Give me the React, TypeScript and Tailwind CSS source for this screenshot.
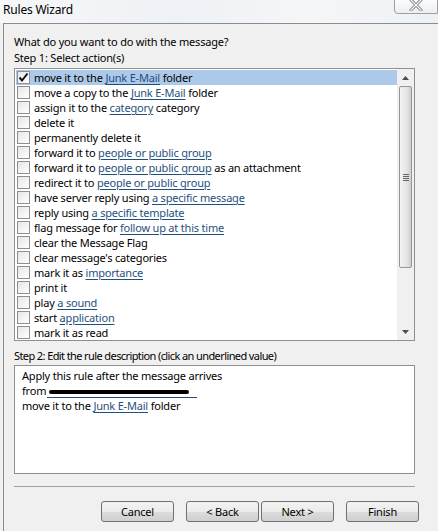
import React from "react";

type Part = string | { link: string };

const actions: Part[][] = [
  ["move it to the ", { link: "Junk E-Mail" }, " folder"],
  ["move a copy to the ", { link: "Junk E-Mail" }, " folder"],
  ["assign it to the ", { link: "category" }, " category"],
  ["delete it"],
  ["permanently delete it"],
  ["forward it to ", { link: "people or public group" }],
  ["forward it to ", { link: "people or public group" }, " as an attachment"],
  ["redirect it to ", { link: "people or public group" }],
  ["have server reply using ", { link: "a specific message" }],
  ["reply using ", { link: "a specific template" }],
  ["flag message for ", { link: "follow up at this time" }],
  ["clear the Message Flag"],
  ["clear message's categories"],
  ["mark it as ", { link: "importance" }],
  ["print it"],
  ["play ", { link: "a sound" }],
  ["start ", { link: "application" }],
  ["mark it as read"],
];

function Link({ children }: { children: React.ReactNode }) {
  return <span className="text-[#1f4f7e] underline underline-offset-[2px]">{children}</span>;
}

function Checkbox({ checked }: { checked?: boolean }) {
  return (
    <span className="flex h-[13px] w-[13px] shrink-0 items-center justify-center border border-[#8f8f8f] bg-gradient-to-br from-[#e6e6e6] to-white">
      {checked && (
        <svg width="11" height="11" viewBox="0 0 11 11">
          <path d="M1.5 5.5 L4 8.5 L9.5 1.5" fill="none" stroke="#111" strokeWidth="2" />
        </svg>
      )}
    </span>
  );
}

function Button({ label }: { label: string }) {
  return (
    <button className="h-[21px] w-[73px] rounded-[3px] border border-[#707070] bg-[linear-gradient(#f2f2f2_0%,#ebebeb_50%,#dddddd_51%,#cfcfcf_100%)] text-[11px] leading-none text-black">
      {label}
    </button>
  );
}

function Scrollbar() {
  return (
    <div className="flex w-[17px] shrink-0 flex-col items-center bg-[#f0f0f0]">
      <div className="flex h-[17px] items-center justify-center">
        <svg width="7" height="4" viewBox="0 0 7 4">
          <path d="M0 4 L3.5 0 L7 4 Z" fill="#4d4d4d" />
        </svg>
      </div>
      <div className="flex h-[182px] w-[13px] items-center justify-center rounded-[2px] border border-[#979797] bg-[linear-gradient(90deg,#f3f3f3,#e4e4e4_60%,#cfcfcf)]">
        <div className="flex flex-col gap-[1px]">
          <span className="h-[1px] w-[6px] bg-[#666]" />
          <span className="h-[1px] w-[6px] bg-[#666]" />
          <span className="h-[1px] w-[6px] bg-[#666]" />
          <span className="h-[1px] w-[6px] bg-[#666]" />
        </div>
      </div>
      <div className="flex-1" />
      <div className="flex h-[17px] items-center justify-center">
        <svg width="7" height="4" viewBox="0 0 7 4">
          <path d="M0 0 L3.5 4 L7 0 Z" fill="#4d4d4d" />
        </svg>
      </div>
    </div>
  );
}

export default function App() {
  return (
    <main className="flex h-[531px] w-[438px] flex-col overflow-hidden bg-[#f0f0f0] font-['Noto_Sans',sans-serif] text-[11px] tracking-[-0.2px] text-black">
      {/* title bar */}
      <div className="relative h-[23px] shrink-0 bg-[linear-gradient(90deg,#f6f7f9,#eef1f5_40%,#f4f6f8_70%,#eef1f4)]">
        <span className="absolute left-[3px] top-[2px] text-[12px] leading-[16px]">Rules Wizard</span>
        <div className="absolute right-0 top-[-2px] flex h-[16px] w-[44px] items-center justify-center rounded-bl-[4px] border border-[#9aa0a8] bg-[linear-gradient(#fdfdfd,#eceef1)]">
          <svg width="14" height="12" viewBox="0 0 14 12" className="mt-[-2px]">
            <path d="M2 1 L12 11 M12 1 L2 11" stroke="#7a7f86" strokeWidth="3" strokeLinecap="round" />
            <path d="M2 1 L12 11 M12 1 L2 11" stroke="#fafafa" strokeWidth="1.2" strokeLinecap="round" />
          </svg>
        </div>
      </div>

      {/* dialog body */}
      <div className="ml-[3px] flex flex-1 flex-col border-l border-t border-[#8c8c8c] px-[10px] pt-[10px] leading-[16px]">
        <p>What do you want to do with the message?</p>
        <p>Step 1: Select action(s)</p>

        <div className="mt-[2px] flex h-[273px] w-[401px] border border-[#8e8f8f] bg-white">
          <ul className="flex-1 pl-[1px] pt-[1px]">
            {actions.map((parts, i) => (
              <li
                key={i}
                className={`flex h-[15px] items-center gap-[4px] whitespace-nowrap pl-[1px] leading-[15px] ${i === 0 ? "bg-[#adc9ea]" : ""}`}
              >
                <Checkbox checked={i === 0} />
                <span>
                  {parts.map((p, j) =>
                    typeof p === "string" ? <React.Fragment key={j}>{p}</React.Fragment> : <Link key={j}>{p.link}</Link>
                  )}
                </span>
              </li>
            ))}
          </ul>
          <Scrollbar />
        </div>

        <p className="mt-[7px] tracking-[-0.6px]">Step 2: Edit the rule description (click an underlined value)</p>
        <div className="mt-[1px] h-[109px] w-[401px] border border-[#8e8f8f] bg-white pl-[7px] pt-[2px] leading-[15px]">
          <p>Apply this rule after the message arrives</p>
          <p className="flex items-center">
            from
            <span className="relative ml-[1px] inline-block h-[15px] w-[150px] border-b border-[#1f4f7e]">
              <span className="absolute left-[2px] top-[7px] h-[4px] w-[140px] rounded-full bg-black" />
            </span>
          </p>
          <p>
            move it to the <Link>Junk E-Mail</Link> folder
          </p>
        </div>

        <div className="mt-[12px] h-[1px] w-[401px] bg-[#a0a0a0]" />

        <div className="mt-[14px] flex justify-end pr-[9px]">
          <Button label="Cancel" />
          <div className="ml-[12px] flex gap-[2px]">
            <Button label="< Back" />
            <Button label="Next >" />
          </div>
          <div className="ml-[12px]">
            <Button label="Finish" />
          </div>
        </div>
      </div>
    </main>
  );
}
